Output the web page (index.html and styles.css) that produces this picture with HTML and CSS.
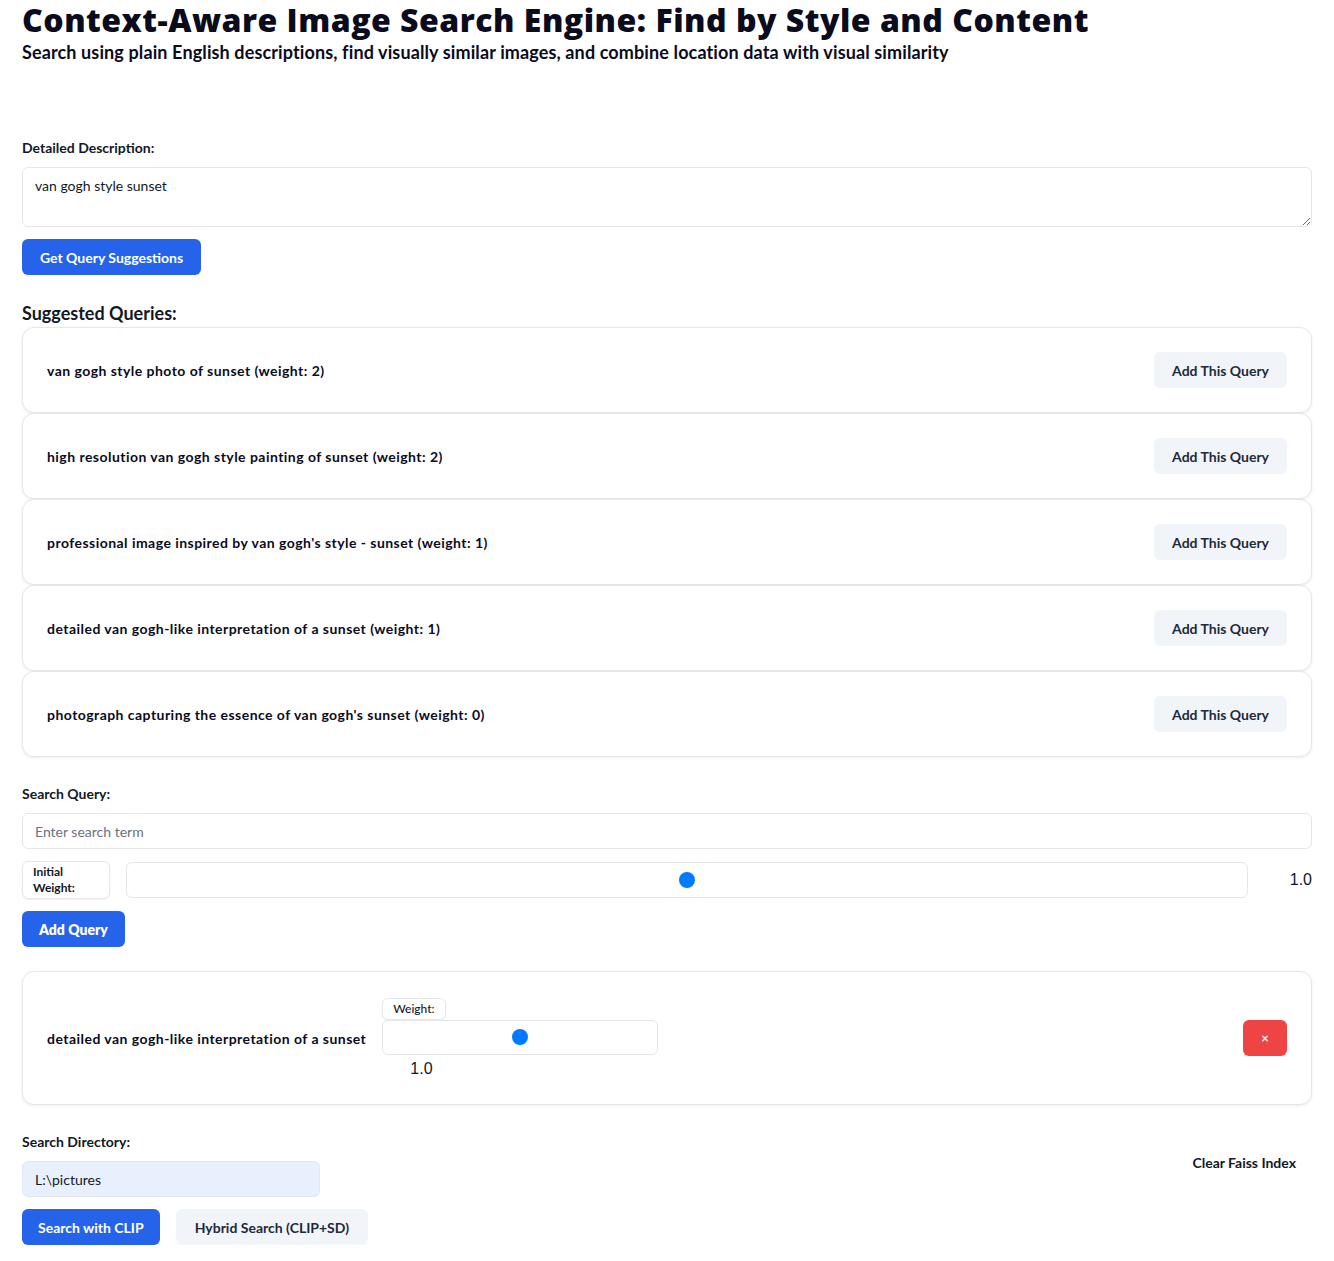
FILE: index.html
```html
<!DOCTYPE html>
<html lang="en">
<head>
<meta charset="utf-8">
<title>Context-Aware Image Search Engine</title>
<link rel="stylesheet" href="styles.css">
</head>
<body>
<div class="page">
  <header class="header">
    <h1 class="title">Context-Aware Image Search Engine: Find by Style and Content</h1>
    <p class="subtitle">Search using plain English descriptions, find visually similar images, and combine location data with visual similarity</p>
  </header>

  <section class="block-desc">
    <label class="label" for="desc">Detailed Description:</label>
    <textarea id="desc" class="textarea">van gogh style sunset</textarea>
    <button class="btn btn-primary btn-spaced btn-wide">Get Query Suggestions</button>
  </section>

  <section class="suggestions">
    <h2 class="section-title">Suggested Queries:</h2>
    <div class="card suggestion">
      <span class="card-text">van gogh style photo of sunset (weight: 2)</span>
      <button class="btn btn-secondary">Add This Query</button>
    </div>
    <div class="card suggestion">
      <span class="card-text">high resolution van gogh style painting of sunset (weight: 2)</span>
      <button class="btn btn-secondary">Add This Query</button>
    </div>
    <div class="card suggestion">
      <span class="card-text">professional image inspired by van gogh's style - sunset (weight: 1)</span>
      <button class="btn btn-secondary">Add This Query</button>
    </div>
    <div class="card suggestion">
      <span class="card-text">detailed van gogh-like interpretation of a sunset (weight: 1)</span>
      <button class="btn btn-secondary">Add This Query</button>
    </div>
    <div class="card suggestion">
      <span class="card-text">photograph capturing the essence of van gogh's sunset (weight: 0)</span>
      <button class="btn btn-secondary">Add This Query</button>
    </div>
  </section>

  <section class="block">
    <label class="label" for="q">Search Query:</label>
    <input id="q" class="input" type="text" placeholder="Enter search term">
    <div class="weight-row">
      <span class="chip chip-initial">Initial Weight:</span>
      <input class="range range-wide" type="range" min="0" max="2" step="0.1" value="1">
      <span class="range-value">1.0</span>
    </div>
    <button class="btn btn-primary btn-spaced btn-add">Add Query</button>
  </section>

  <div class="card query-card">
    <span class="card-text">detailed van gogh-like interpretation of a sunset</span>
    <div class="query-weight">
      <span class="chip chip-weight">Weight:</span>
      <input class="range range-small" type="range" min="0" max="2" step="0.1" value="1">
      <span class="query-value">1.0</span>
    </div>
    <button class="btn btn-danger">×</button>
  </div>

  <section class="block">
    <div class="dir-row">
      <div class="dir-group">
        <label class="label" for="dir">Search Directory:</label>
        <input id="dir" class="input input-dir" type="text" value="L:\pictures">
      </div>
      <button class="btn btn-plain">Clear Faiss Index</button>
    </div>
    <div class="actions">
      <button class="btn btn-primary">Search with CLIP</button>
      <button class="btn btn-secondary btn-hybrid">Hybrid Search (CLIP+SD)</button>
    </div>
  </section>
</div>
</body>
</html>
```
FILE: styles.css
```css
* { box-sizing: border-box; }

body {
  margin: 0;
  font-family: Lato, "Liberation Sans", sans-serif;
  color: #111827;
  background: #ffffff;
}

.page {
  padding: 0 22px 16px;
}

.title {
  margin: 0;
  font-family: "Open Sans", Lato, sans-serif;
  font-size: 32px;
  line-height: 40px;
  font-weight: 800;
  letter-spacing: 0.5px;
  color: #0b0b1e;
}

.subtitle {
  margin: 0;
  font-size: 18px;
  line-height: 24px;
  font-weight: 700;
  letter-spacing: 0.12px;
  color: #0b0b1e;
}

.block-desc {
  margin-top: 74px;
}

.block {
  margin-top: 27px;
}

.label {
  display: block;
  font-size: 14px;
  line-height: 20px;
  font-weight: 700;
  margin-bottom: 9px;
  color: #111827;
}

.textarea {
  display: block;
  width: 100%;
  height: 60px;
  padding: 8px 12px;
  border: 1px solid #e5e7eb;
  border-radius: 6px;
  font-family: inherit;
  font-size: 14px;
  line-height: 20px;
  color: #111827;
  resize: vertical;
}

.input {
  display: block;
  width: 100%;
  height: 36px;
  padding: 0 12px;
  border: 1px solid #e5e7eb;
  border-radius: 6px;
  font-family: inherit;
  font-size: 14px;
  color: #111827;
  background: #fff;
}

.input::placeholder { color: #6b7280; }

.input-dir {
  width: 298px;
  background: #e8f0fe;
  border-color: #e2e8f0;
}

.btn {
  height: 36px;
  padding: 0 16px;
  border: none;
  border-radius: 6px;
  font-family: inherit;
  font-size: 14px;
  font-weight: 700;
  cursor: pointer;
  white-space: nowrap;
}

.btn-wide {
  padding: 0 18px;
}

.btn-add {
  padding: 0 17px;
  font-weight: 800;
}

.btn-primary {
  background: #2563eb;
  color: #ffffff;
}

.btn-secondary {
  background: #f1f5f9;
  color: #1e293b;
  padding: 0 18px;
}

.btn-hybrid {
  padding: 0 19px;
}

.btn-danger {
  width: 44px;
  padding: 0;
  margin-left: auto;
  background: #ef4444;
  color: #ffffff;
  font-size: 13px;
}

.btn-plain {
  background: transparent;
  color: #111827;
  margin-top: -4px;
}

.btn-spaced {
  display: block;
  margin-top: 12px;
}

.section-title {
  margin: 24px 0 0;
  font-size: 18px;
  line-height: 28px;
  font-weight: 700;
}

.card {
  border: 1px solid #e5e7eb;
  border-radius: 12px;
  background: #fff;
  box-shadow: 0 1px 3px rgba(15, 23, 42, 0.08);
  padding: 24px;
  display: flex;
  align-items: center;
}

.suggestion {
  justify-content: space-between;
  height: 86px;
}

.card-text {
  font-size: 14px;
  font-weight: 700;
  letter-spacing: 0.46px;
  color: #0b0b1e;
}

.weight-row {
  display: flex;
  align-items: center;
  gap: 16px;
  margin-top: 12px;
}

.chip {
  border: 1px solid #e5e7eb;
  border-radius: 6px;
  background: #fff;
  box-shadow: 0 1px 2px rgba(15, 23, 42, 0.06);
  font-size: 12px;
  font-weight: 700;
  color: #111827;
}

.chip-initial {
  width: 88px;
  padding: 2px 10px;
  line-height: 16px;
}

.chip-weight {
  padding: 2px 10px;
  line-height: 16px;
  font-weight: 500;
}

.range {
  -webkit-appearance: none;
  appearance: none;
  margin: 0;
  height: 36px;
  padding: 0 8px;
  border: 1px solid #e5e7eb;
  border-radius: 6px;
  background: #fff;
}

.range::-webkit-slider-runnable-track {
  height: 16px;
  background: transparent;
  border: none;
}

.range::-webkit-slider-thumb {
  -webkit-appearance: none;
  appearance: none;
  width: 16px;
  height: 16px;
  border-radius: 50%;
  background: #007bff;
  border: none;
}

.range-wide {
  flex: 1;
}

.range-small {
  width: 276px;
  height: 35px;
}

.range-value {
  width: 28px;
  text-align: right;
  font-family: "Liberation Sans", Arial, sans-serif;
  font-size: 16px;
  color: #111827;
  margin-left: 20px;
}

.query-card {
  margin-top: 24px;
  gap: 16px;
  height: 134px;
}

.query-weight {
  display: flex;
  flex-direction: column;
  align-items: flex-start;
}

.query-value {
  padding-left: 28px;
  padding-top: 4px;
  line-height: 20px;
  font-family: "Liberation Sans", Arial, sans-serif;
  font-size: 16px;
  color: #111827;
}

.dir-row {
  display: flex;
  justify-content: space-between;
  align-items: center;
}

.actions {
  display: flex;
  gap: 16px;
  margin-top: 12px;
}
```
